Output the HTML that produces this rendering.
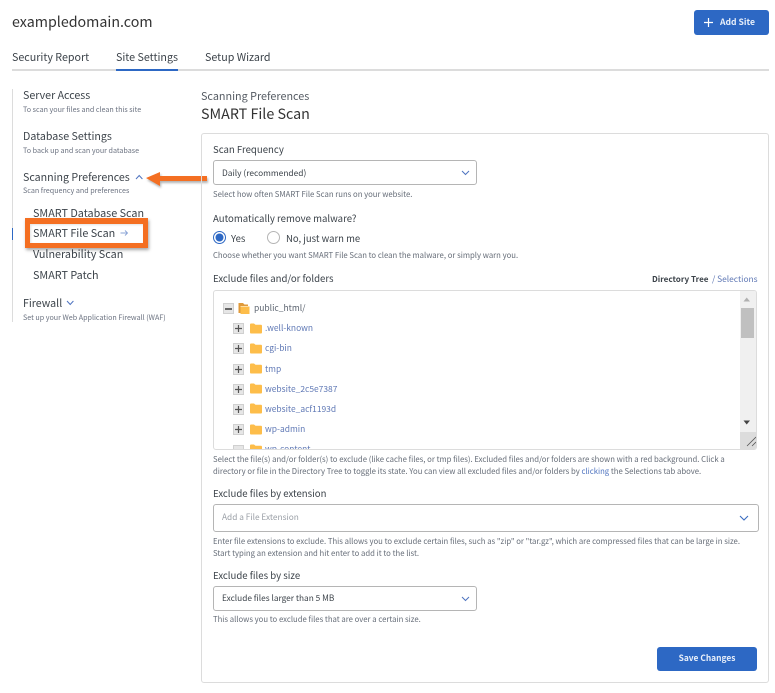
<!DOCTYPE html>
<html><head><meta charset="utf-8">
<style>
html,body{margin:0;padding:0;background:#fff;width:775px;height:693px;overflow:hidden}
body{position:relative;font-family:"Noto Sans CJK SC","Liberation Sans",sans-serif;color:#3c434a}
.t{position:absolute;white-space:nowrap;line-height:16px}
.b{position:absolute;box-sizing:border-box}
.h{font-size:10.65px;color:#3c434a}
.s{font-size:7.15px;color:#6b7280}
.n{font-size:10.8px;color:#3c434a}
.d{font-size:7.72px;color:#666d78}
.l{font-size:9.6px;color:#3c434a}
.tr{font-size:8.45px;color:#5f78b5}
.sel{background:#fff;border:1px solid #b5b5b5;border-radius:3px}
svg{position:absolute;overflow:visible}
a{color:#4f74c0;text-decoration:none}
</style></head><body>

<div class="t" style="left:12px;top:13px;font-size:14.25px;color:#333;line-height:18px">exampledomain.com</div>
<div class="b" style="left:694px;top:10px;width:75px;height:25px;background:#2d68c4;border-radius:3px"></div>
<svg style="left:703px;top:17px" width="12" height="12"><path d="M1 5.500H10M5.500 1V10" stroke="#fff" stroke-width="1.200" fill="none"/></svg>
<div class="t" style="left:720px;top:14px;font-size:8.6px;font-weight:700;color:#e8effa">Add Site</div>

<div class="t" style="left:12px;top:50px;font-size:10.7px;color:#3c434a">Security Report</div>
<div class="t" style="left:116px;top:50px;font-size:10.7px;color:#3c434a">Site Settings</div>
<div class="t" style="left:205px;top:50px;font-size:10.7px;color:#3c434a">Setup Wizard</div>
<div class="b" style="left:12px;top:69px;width:757px;height:2px;background:#dcdcdc"></div>
<div class="b" style="left:116px;top:69px;width:62px;height:2px;background:#2d68c4"></div>

<div class="b" style="left:12px;top:89px;width:1px;height:233px;background:#dcdcdc"></div>
<div class="b" style="left:12px;top:228px;width:1px;height:12px;background:#2d68c4"></div>

<div class="t h" style="left:23px;top:88px">Server Access</div>
<div class="t s" style="left:23px;top:102px">To scan your files and clean this site</div>
<div class="t h" style="left:23px;top:129px">Database Settings</div>
<div class="t s" style="left:23px;top:143px">To back up and scan your database</div>
<div class="t h" style="left:23px;top:170px">Scanning Preferences</div>
<svg style="left:135px;top:174px" width="9" height="6"><path d="M1 5L4.200 1.500L7.400 5" stroke="#4f74c0" stroke-width="1" fill="none"/></svg>
<div class="t s" style="left:23px;top:183px">Scan frequency and preferences</div>
<div class="t n" style="left:33px;top:205px">SMART Database Scan</div>
<div class="t n" style="left:33px;top:225px">SMART File Scan</div>
<svg style="left:120px;top:229px" width="9" height="8"><path d="M0.500 4H7.500M5 1.500L7.500 4L5 6.500" stroke="#8aa3d6" stroke-width="0.900" fill="none"/></svg>
<div class="t n" style="left:33px;top:246px">Vulnerability Scan</div>
<div class="t n" style="left:33px;top:267px">SMART Patch</div>
<div class="t h" style="left:23px;top:296px">Firewall</div>
<svg style="left:66px;top:300px" width="9" height="6"><path d="M1 1L4.200 4.500L7.400 1" stroke="#4f74c0" stroke-width="1" fill="none"/></svg>
<div class="t s" style="left:23px;top:310px">Set up your Web Application Firewall (WAF)</div>

<!-- orange callouts -->
<div class="b" style="left:25px;top:218px;width:123px;height:30px;border:5px solid #f46f22;border-top-width:6px;box-shadow:1px 2px 3px rgba(0,0,0,.35), inset 1px 1px 2px rgba(0,0,0,.12)"></div>
<svg style="left:146px;top:171px" width="62" height="16"><path d="M0 7L14 1V5H61V10H14V15Z" fill="#f46f22" style="filter:drop-shadow(1px 2px 1px rgba(0,0,0,.3))"/></svg>

<!-- main -->
<div class="t" style="left:201px;top:88px;font-size:10.8px;color:#555b63">Scanning Preferences</div>
<div class="t" style="left:201px;top:105px;font-size:14.3px;color:#333;line-height:18px">SMART File Scan</div>
<div class="b" style="left:201px;top:133px;width:568px;height:550px;border:1px solid #dcdcdc;border-radius:3px"></div>

<div class="t l" style="left:213px;top:141px">Scan Frequency</div>
<div class="b sel" style="left:213px;top:160px;width:264px;height:25px"></div>
<div class="t" style="left:222px;top:165px;font-size:8.4px;color:#3c434a">Daily (recommended)</div>
<svg style="left:461px;top:170px" width="10" height="6"><path d="M1 1L4.500 4.500L8 1" stroke="#4f74c0" stroke-width="1" fill="none"/></svg>
<div class="t d" style="left:213px;top:187px">Select how often SMART File Scan runs on your website.</div>

<div class="t l" style="left:213px;top:210px">Automatically remove malware?</div>
<svg style="left:213px;top:231px" width="14" height="14"><circle cx="6.500" cy="6.500" r="6" fill="#fff" stroke="#2d68c4" stroke-width="1"/><circle cx="6.500" cy="6.500" r="4" fill="#2d68c4"/></svg>
<div class="t" style="left:231px;top:230px;font-size:9.5px;color:#3c434a">Yes</div>
<svg style="left:267px;top:231px" width="14" height="14"><circle cx="6.500" cy="6.500" r="6" fill="#fff" stroke="#b5b5b5" stroke-width="1"/></svg>
<div class="t" style="left:286px;top:230px;font-size:9.5px;color:#3c434a">No, just warn me</div>
<div class="t d" style="left:213px;top:248px">Choose whether you want SMART File Scan to clean the malware, or simply warn you.</div>

<div class="t l" style="left:213px;top:270px">Exclude files and/or folders</div>
<div class="t" style="left:652px;top:272px;font-size:8.1px;font-weight:700;color:#3c434a">Directory Tree</div>
<div class="t" style="left:712px;top:271px;font-size:8.4px;color:#5f78b5">/ Selections</div>

<!-- tree -->
<div class="b" style="left:213px;top:290px;width:544px;height:160px;border:1px solid #dcdcdc;border-radius:3px;overflow:hidden;background:#fff">
 <div class="b" style="left:526px;top:0;width:17px;height:158px;background:#f0f0f0"></div>
 <div class="b" style="left:527px;top:17px;width:13px;height:30px;background:#c0c0c0"></div>
 <div class="b" style="left:526px;top:141px;width:17px;height:17px;background:#dcdcdc"></div>
 <svg style="left:527px;top:141px" width="16" height="17"><path d="M15 5L6 14M15 10L11 14" stroke="#555" stroke-width="0.800" fill="none"/></svg>
 <svg style="left:529px;top:6px" width="10" height="6"><path d="M0.500 4.500L3.700 0.500L7 4.500Z" fill="#b0b0b0"/></svg>
 <svg style="left:529px;top:129px" width="10" height="6"><path d="M0.500 0.500H7L3.700 4.500Z" fill="#444"/></svg>

 <div class="b" style="left:9px;top:12px;width:11px;height:11px;background:#e6e6e6;border:1px solid #d0d0d0"></div>
 <div class="b" style="left:11px;top:17px;width:7px;height:1.500px;background:#666"></div>
 <svg style="left:24px;top:11px" width="13" height="13"><path d="M0.500 1H5L6.500 2.500H10V4H2.500V11H0.500Z" fill="#e09a3a"/><path d="M2.500 4.500H11.500V12H2.500Z" fill="#fdbd4a"/></svg>
 <div class="t" style="left:40px;top:9px;font-size:8.5px;color:#5c6470">public_html/</div>

 <div class="b" style="left:19px;top:32px;width:11px;height:11px;background:#e6e6e6;border:1px solid #d0d0d0"></div>
 <svg style="left:20px;top:33px" width="9" height="9"><path d="M1 4.500H8M4.500 1V8" stroke="#555" stroke-width="1.200"/></svg>
 <svg style="left:36px;top:32px" width="12" height="11"><path d="M0 1.500Q0 .5 1 .5H4L5.500 1.800H11Q12 1.800 12 3V9.500Q12 10.500 11 10.500H1Q0 10.500 0 9.500Z" fill="#fdbd4a"/></svg>
 <div class="t tr" style="left:51px;top:29px">.well-known</div>

 <div class="b" style="left:19px;top:52px;width:11px;height:11px;background:#e6e6e6;border:1px solid #d0d0d0"></div>
 <svg style="left:20px;top:53px" width="9" height="9"><path d="M1 4.500H8M4.500 1V8" stroke="#555" stroke-width="1.200"/></svg>
 <svg style="left:36px;top:52px" width="12" height="11"><path d="M0 1.500Q0 .5 1 .5H4L5.500 1.800H11Q12 1.800 12 3V9.500Q12 10.500 11 10.500H1Q0 10.500 0 9.500Z" fill="#fdbd4a"/></svg>
 <div class="t tr" style="left:51px;top:49px">cgi-bin</div>

 <div class="b" style="left:19px;top:73px;width:11px;height:11px;background:#e6e6e6;border:1px solid #d0d0d0"></div>
 <svg style="left:20px;top:74px" width="9" height="9"><path d="M1 4.500H8M4.500 1V8" stroke="#555" stroke-width="1.200"/></svg>
 <svg style="left:36px;top:72px" width="12" height="11"><path d="M0 1.500Q0 .5 1 .5H4L5.500 1.800H11Q12 1.800 12 3V9.500Q12 10.500 11 10.500H1Q0 10.500 0 9.500Z" fill="#fdbd4a"/></svg>
 <div class="t tr" style="left:51px;top:70px">tmp</div>

 <div class="b" style="left:19px;top:93px;width:11px;height:11px;background:#e6e6e6;border:1px solid #d0d0d0"></div>
 <svg style="left:20px;top:94px" width="9" height="9"><path d="M1 4.500H8M4.500 1V8" stroke="#555" stroke-width="1.200"/></svg>
 <svg style="left:36px;top:92px" width="12" height="11"><path d="M0 1.500Q0 .5 1 .5H4L5.500 1.800H11Q12 1.800 12 3V9.500Q12 10.500 11 10.500H1Q0 10.500 0 9.500Z" fill="#fdbd4a"/></svg>
 <div class="t tr" style="left:51px;top:90px">website_2c5e7387</div>

 <div class="b" style="left:19px;top:113px;width:11px;height:11px;background:#e6e6e6;border:1px solid #d0d0d0"></div>
 <svg style="left:20px;top:114px" width="9" height="9"><path d="M1 4.500H8M4.500 1V8" stroke="#555" stroke-width="1.200"/></svg>
 <svg style="left:36px;top:112px" width="12" height="11"><path d="M0 1.500Q0 .5 1 .5H4L5.500 1.800H11Q12 1.800 12 3V9.500Q12 10.500 11 10.500H1Q0 10.500 0 9.500Z" fill="#fdbd4a"/></svg>
 <div class="t tr" style="left:51px;top:110px">website_acf1193d</div>

 <div class="b" style="left:19px;top:133px;width:11px;height:11px;background:#e6e6e6;border:1px solid #d0d0d0"></div>
 <svg style="left:20px;top:134px" width="9" height="9"><path d="M1 4.500H8M4.500 1V8" stroke="#555" stroke-width="1.200"/></svg>
 <svg style="left:36px;top:133px" width="12" height="11"><path d="M0 1.500Q0 .5 1 .5H4L5.500 1.800H11Q12 1.800 12 3V9.500Q12 10.500 11 10.500H1Q0 10.500 0 9.500Z" fill="#fdbd4a"/></svg>
 <div class="t tr" style="left:51px;top:130px">wp-admin</div>

 <div class="b" style="left:19px;top:154px;width:11px;height:11px;background:#e6e6e6;border:1px solid #d0d0d0"></div>
 <svg style="left:36px;top:153px" width="12" height="11"><path d="M0 1.500Q0 .5 1 .5H4L5.500 1.800H11Q12 1.800 12 3V9.500Q12 10.500 11 10.500H1Q0 10.500 0 9.500Z" fill="#fdbd4a"/></svg>
 <div class="t tr" style="left:51px;top:150px">wp-content</div>
</div>

<div class="t d" style="left:213px;top:452px">Select the file(s) and/or folder(s) to exclude (like cache files, or tmp files). Excluded files and/or folders are shown with a red background. Click a</div>
<div class="t d" style="left:213px;top:464px">directory or file in the Directory Tree to toggle its state. You can view all excluded files and/or folders by <a>clicking</a> the Selections tab above.</div>

<div class="t l" style="left:213px;top:485px">Exclude files by extension</div>
<div class="b sel" style="left:213px;top:504px;width:546px;height:28px"></div>
<div class="t" style="left:222px;top:509px;font-size:8.3px;color:#9a9fa6">Add a File Extension</div>
<svg style="left:739px;top:515px" width="11" height="7"><path d="M1 1L5 5L9 1" stroke="#3a6cc0" stroke-width="1.100" fill="none"/></svg>
<div class="t d" style="left:213px;top:534px">Enter file extensions to exclude. This allows you to exclude certain files, such as "zip" or "tar.gz", which are compressed files that can be large in size.</div>
<div class="t d" style="left:213px;top:546px">Start typing an extension and hit enter to add it to the list.</div>

<div class="t l" style="left:213px;top:567px">Exclude files by size</div>
<div class="b sel" style="left:213px;top:586px;width:264px;height:25px"></div>
<div class="t" style="left:222px;top:590px;font-size:8.3px;color:#3c434a">Exclude files larger than 5 MB</div>
<svg style="left:461px;top:596px" width="10" height="6"><path d="M1 1L4.500 4.500L8 1" stroke="#4f74c0" stroke-width="1" fill="none"/></svg>
<div class="t d" style="left:213px;top:612px">This allows you to exclude files that are over a certain size.</div>

<div class="b" style="left:657px;top:647px;width:100px;height:24px;background:#2d68c4;border-radius:3px"></div>
<div class="t" style="left:657px;width:100px;text-align:center;top:650px;font-size:8.4px;font-weight:700;color:#e8effa">Save Changes</div>

</body></html>
